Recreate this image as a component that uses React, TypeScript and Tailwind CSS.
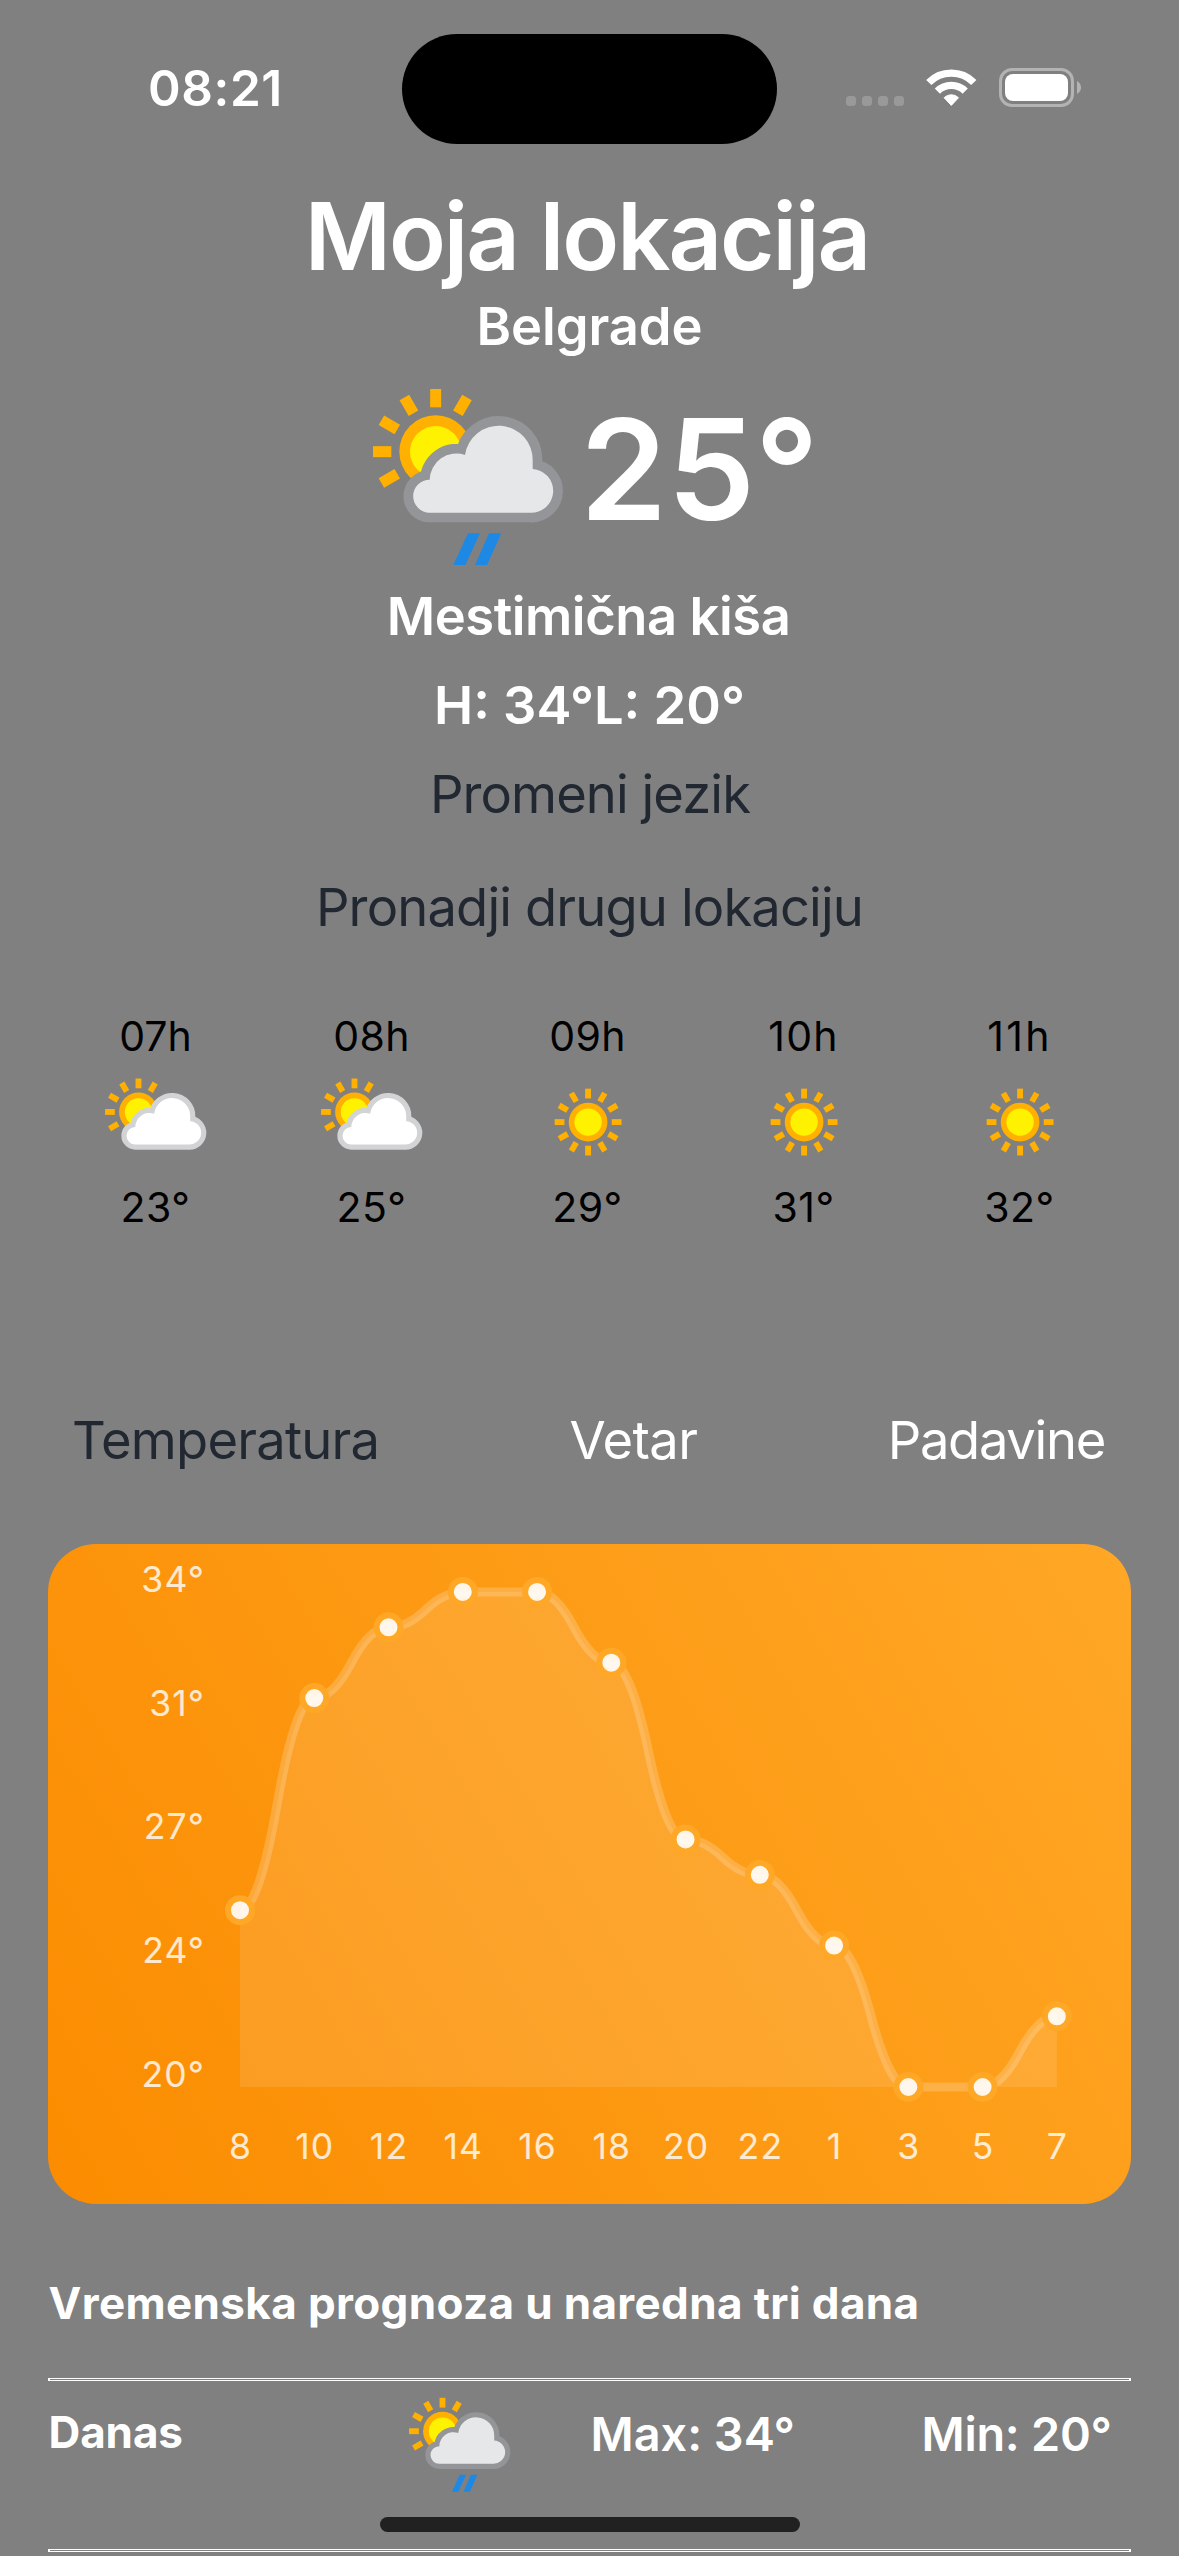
type Sky = 'rain' | 'cloudy' | 'sunny';

const hours: { hour: string; sky: Sky; temp: string; spacing: string }[] = [
  { hour: '07h', sky: 'cloudy', temp: '23°', spacing: 'tracking-[0px]' },
  { hour: '08h', sky: 'cloudy', temp: '25°', spacing: 'tracking-[0.4px]' },
  { hour: '09h', sky: 'sunny', temp: '29°', spacing: 'tracking-[0.4px]' },
  { hour: '10h', sky: 'sunny', temp: '31°', spacing: 'tracking-[1.2px]' },
  { hour: '11h', sky: 'sunny', temp: '32°', spacing: 'tracking-[2.3px]' },
];

const points = [
  { label: '8', value: 25 },
  { label: '10', value: 31 },
  { label: '12', value: 33 },
  { label: '14', value: 34 },
  { label: '16', value: 34 },
  { label: '18', value: 32 },
  { label: '20', value: 27 },
  { label: '22', value: 26 },
  { label: '1', value: 24 },
  { label: '3', value: 20 },
  { label: '5', value: 20 },
  { label: '7', value: 22 },
];

const scaleLabels = ['34°', '31°', '27°', '24°', '20°'];

const SUN = '#ffb000';

function Sun({ x, y, rays }: { x: number; y: number; rays: number[] }) {
  return (
    <g transform={`translate(${x} ${y})`}>
      <circle r="109" fill={SUN} />
      <circle r="77" fill="#fff200" />
      {rays.map((angle) => (
        <rect key={angle} x="-16.5" y="-188" width="33" height="55" fill={SUN} transform={`rotate(${angle})`} />
      ))}
    </g>
  );
}

function WeatherIcon({ sky, className }: { sky: Sky; className: string }) {
  if (sky === 'sunny') {
    return (
      <svg viewBox="0 0 675 675" className={className}>
        <Sun x={338} y={338} rays={[0, 30, 60, 90, 120, 150, 180, 210, 240, 270, 300, 330]} />
      </svg>
    );
  }
  const rain = sky === 'rain';
  return (
    <svg viewBox="0 0 675 675" className={className}>
      <g transform={rain ? 'translate(-19 14)' : 'translate(-19 35)'}>
        <Sun x={258} y={246} rays={[0, 30, 240, 270, 300, 330]} />
        <path
          d="M240 429A49.5 49.5 0 0 1 240 330A80 80 0 0 1 346 256A102 102 0 0 1 549 272V298A65.5 65.5 0 0 1 541 429Z"
          fill={rain ? '#e6e7e8' : '#ffffff'}
          stroke={rain ? '#939598' : '#d1d3d4'}
          strokeWidth="58"
          strokeLinejoin="round"
          paintOrder="stroke"
        />
        {rain && <path d="M355 491H391L347 586H311ZM418 491H455L412 586H376Z" fill="#1e88e5" />}
      </g>
    </svg>
  );
}

function StatusBar() {
  return (
    <div className="flex h-[144px] items-start pt-[34px] pl-[148px] text-white">
      <div className="mt-[24px] w-[254px] text-[49.5px] leading-[60px] font-semibold tracking-[0.6px]">08:21</div>
      <div className="h-[110px] w-[375px] rounded-full bg-black" />
      <div className="mt-[62px] ml-[69px] flex gap-[6px]">
        <i className="size-[10px] rounded-[3.5px] bg-[#999999]" />
        <i className="size-[10px] rounded-[3.5px] bg-[#999999]" />
        <i className="size-[10px] rounded-[3.5px] bg-[#999999]" />
        <i className="size-[10px] rounded-[3.5px] bg-[#999999]" />
      </div>
      <svg viewBox="0 0 51 38" className="mt-[35px] ml-[22px] h-[38px] w-[51px]" fill="none" stroke="#fff" strokeWidth="7.4">
        <path d="M2.8 13.5A31.8 31.8 0 0 1 47.8 13.5" />
        <path d="M11.4 22.1A19.7 19.7 0 0 1 39.2 22.1" />
        <path d="M18.1 28.7A10.3 10.3 0 0 1 32.5 28.7L25.3 36.4Z" fill="#fff" strokeWidth="1" strokeLinejoin="round" />
      </svg>
      <svg viewBox="0 0 83 39" className="mt-[34px] ml-[22px] h-[39px] w-[83px]">
        <rect x="1.5" y="1.5" width="72" height="36" rx="11.5" fill="none" stroke="#b3b3b3" strokeWidth="3" />
        <rect x="6" y="6" width="63" height="27" rx="8" fill="#fff" />
        <path d="M78 13C80.500 14.500 82 16.800 82 19.500S80.500 24.500 78 26Z" fill="#b3b3b3" />
      </svg>
    </div>
  );
}

function Chart() {
  const xs = points.map((_, i) => 192 + i * 74.26);
  const ys = points.map((p) => 543 - (p.value - 20) * 35.36);
  const segments = points
    .slice(1)
    .map((_, i) => {
      const midX = (xs[i] + xs[i + 1]) / 2;
      const midY = (ys[i] + ys[i + 1]) / 2;
      return `Q${(midX + xs[i]) / 2} ${ys[i]} ${midX} ${midY}Q${(midX + xs[i + 1]) / 2} ${ys[i + 1]} ${xs[i + 1]} ${ys[i + 1]}`;
    })
    .join('');
  const line = `M${xs[0]} ${ys[0]}${segments}`;
  return (
    <svg
      viewBox="0 0 1083 660"
      className="mx-12 mt-[74px] block h-[660px] w-[1083px] rounded-[48px] bg-[linear-gradient(58.64deg,#fb8c00,#ffa726)]"
    >
      <path d={`${line}V543H${xs[0]}Z`} fill="#fff" fillOpacity="0.11" />
      <path d={line} fill="none" stroke="#fff" strokeOpacity="0.2" strokeWidth="9" />
      {xs.map((x, i) => (
        <circle key={x} cx={x} cy={ys[i]} r="12" fill="#fff" fillOpacity="0.9" />
      ))}
      {xs.map((x, i) => (
        <circle key={x} cx={x} cy={ys[i]} r="12" fill="none" stroke="#ffa726" strokeWidth="6" />
      ))}
      <g className="fill-white/80 text-[35.5px]">
        {scaleLabels.map((label, i) => (
          <text key={label} x="157" y={47.8 + i * 123.8} textAnchor="end" letterSpacing="1.1">
            {label}
          </text>
        ))}
        {points.map((p, i) => (
          <text key={p.label} x={xs[i] + 0.6} y="614.9" textAnchor="middle" letterSpacing="1.2">
            {p.label}
          </text>
        ))}
      </g>
    </svg>
  );
}

function Divider() {
  return <div className="mx-12 h-[3px] border-x-2 border-y border-white" />;
}

export default function App() {
  return (
    <main className="relative h-[2556px] w-[1179px] overflow-hidden bg-[#808080] font-['Inter',sans-serif] whitespace-nowrap">
      <StatusBar />

      <section className="flex flex-col items-center pt-[42px] text-[52.5px] leading-[60px] font-semibold text-white">
        <h1 className="mr-[5px] text-[93.5px] leading-[100px] tracking-[-1.97px]">Moja lokacija</h1>
        <h2 className="mt-[10px] tracking-[-0.07px]">Belgrade</h2>
        <div className="mt-[9px] flex h-[221px] w-[467px] items-start">
          <WeatherIcon sky="rain" className="size-[225px] shrink-0" />
          <span className="-ml-px text-[140px] leading-[208px]">25°</span>
        </div>
        <p className="mr-[2px] tracking-[-0.44px]">Mestimična kiša</p>
        <p className="mt-[29px]">H: 34°L: 20°</p>
        <button className="mt-[29px] ml-px font-normal tracking-[-0.92px] text-[#212832]">Promeni jezik</button>
        <button className="mt-[53px] font-normal tracking-[-0.85px] text-[#212832]">Pronadji drugu lokaciju</button>
      </section>

      <section className="mt-[75px] flex pl-[47.500px] text-[41px] leading-[48px] text-black">
        {hours.map(({ hour, sky, temp, spacing }) => (
          <div key={hour} className="flex w-[216px] shrink-0 flex-col items-center">
            <span className={spacing}>{hour}</span>
            <WeatherIcon sky={sky} className="mt-[2px] size-[120px]" />
            <span className="mt-px tracking-[0.5px]">{temp}</span>
          </div>
        ))}
      </section>

      <nav className="mt-[179px] flex justify-between pr-[74px] pl-[72px] text-[52.5px] leading-[60px] text-white">
        <button className="tracking-[-0.78px] text-[#212832]">Temperatura</button>
        <button className="tracking-[-0.62px]">Vetar</button>
        <button className="tracking-[-1.3px]">Padavine</button>
      </nav>

      <Chart />

      <h3 className="mt-[69px] mb-[45px] ml-[48.5px] text-[44px] leading-[60px] font-bold tracking-[0.36px] text-white">
        Vremenska prognoza u naredna tri dana
      </h3>
      <Divider />
      <div className="grid h-[168px] grid-cols-[351px_191px_331px_auto] pt-[4px] pl-[48.5px] text-[46.8px] leading-[98px] font-semibold text-white">
        <span className="text-[44px] leading-[94px] font-bold tracking-[-0.1px]">Danas</span>
        <WeatherIcon sky="rain" className="size-[120px]" />
        <span>Max: 34°</span>
        <span className="tracking-[-0.25px]">Min: 20°</span>
      </div>
      <Divider />

      <div className="absolute top-[2517px] left-[380px] h-[15px] w-[420px] rounded-full bg-[#212121]" />
    </main>
  );
}
